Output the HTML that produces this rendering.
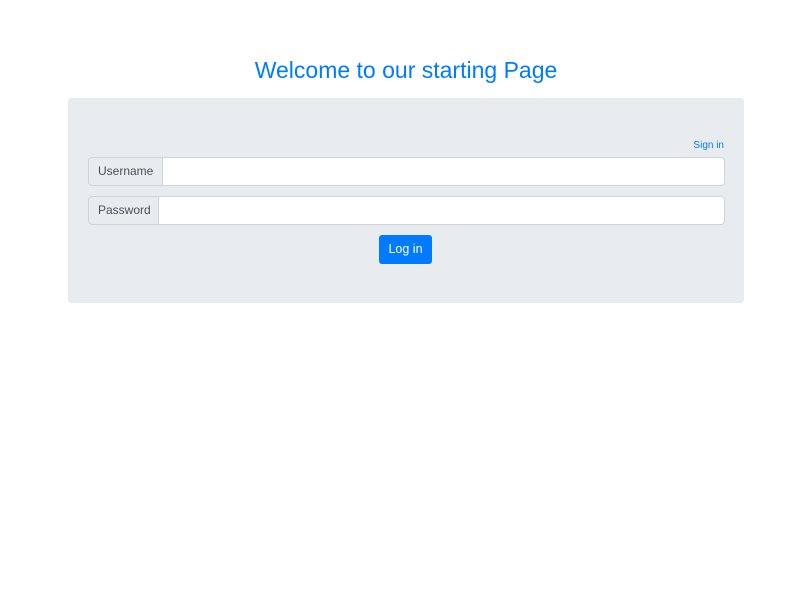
<!DOCTYPE html>
<html><head><style>
body{margin:0;background:#fff;font-family:"Liberation Sans",sans-serif;width:800px;height:600px;overflow:hidden}
h1{position:absolute;top:57px;left:0;width:812px;text-align:center;margin:0;font-weight:normal;font-size:23px;color:#007bff}
.card{position:absolute;left:68px;top:98px;width:676px;height:205px;background:#e9ecef;border-radius:3px}
.sign{position:absolute;right:20px;top:42px;font-size:10px;color:#007bff}
.row{position:absolute;left:20px;width:637px;height:29px;display:flex}
.lab{border:1px solid #ced4da;background:#e9ecef;border-radius:4px 0 0 4px;font-size:12px;color:#495057;line-height:27px;padding:0 9px;box-sizing:border-box}
.inp{flex:1;background:#fff;border:1px solid #ced4da;border-left:none;border-radius:0 4px 4px 0}
.btn{position:absolute;left:311px;top:137px;width:53px;height:29px;background:#007bff;color:#fff;border-radius:3px;font-size:12.5px;text-align:center;line-height:29px}
</style></head><body>
<h1>Welcome to our starting Page</h1>
<div class="card">
<div class="sign">Sign in</div>
<div class="row" style="top:59px"><div class="lab" style="width:75px">Username</div><div class="inp"></div></div>
<div class="row" style="top:98px"><div class="lab" style="width:71px">Password</div><div class="inp"></div></div>
<div class="btn">Log in</div>
</div>
</body></html>
